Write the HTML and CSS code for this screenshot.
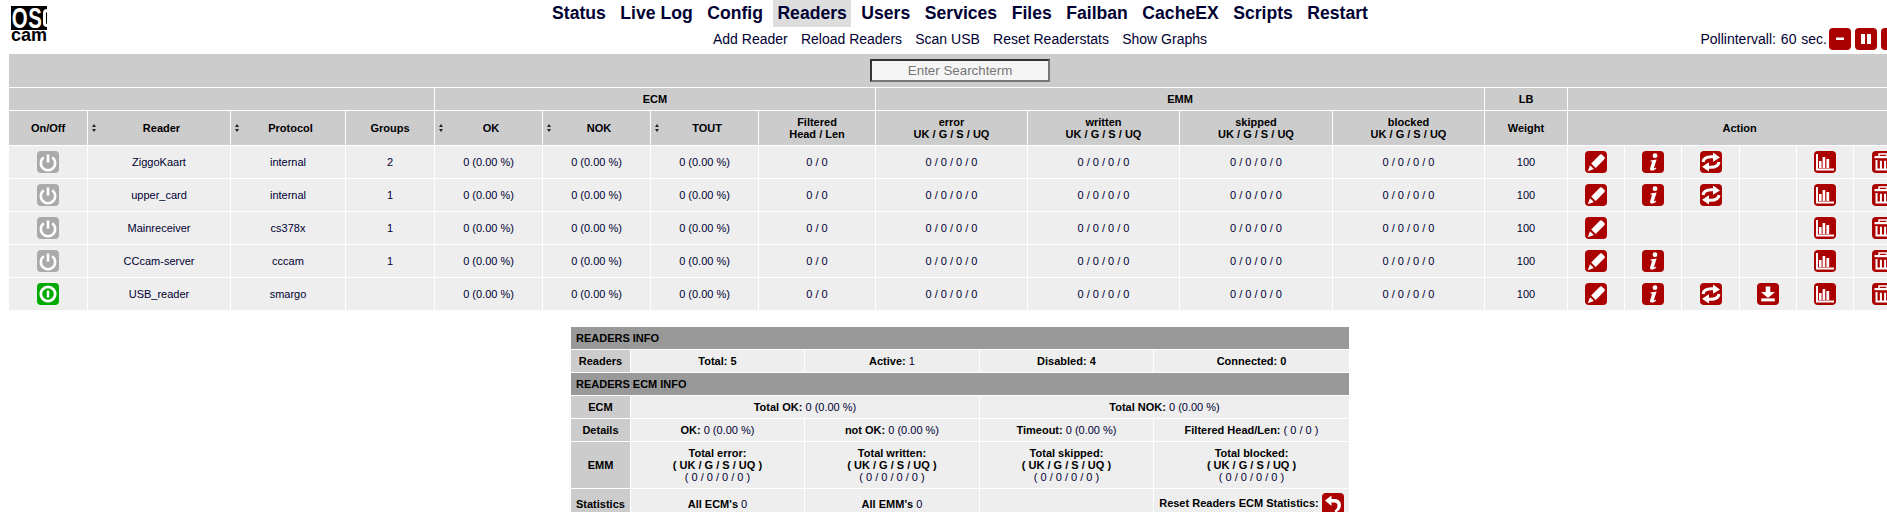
FILE: index.html
```html
<!DOCTYPE html>
<html lang="en">
<head>
<meta charset="utf-8">
<title>OSCam Readers</title>
<link rel="stylesheet" href="styles.css">
</head>
<body>
<svg class="defs" aria-hidden="true">
  <symbol id="i-edit" viewBox="0 0 22 22">
    <path fill="#fff" d="M6.2 12.400 14.600 4c.9-.9 1.700-.9 2.400-.3l2.400 2.400c.6.700.6 1.500-.3 2.400l-8.400 8.400z"/>
    <path fill="#fff" d="M5 14.200 8.900 18 2.800 20.200z"/>
  </symbol>
  <symbol id="i-info" viewBox="0 0 22 22">
    <circle cx="13" cy="4.700" r="2.400" fill="#fff"/>
    <path fill="#fff" d="M8.600 9.400 14.600 8.600 12 16.800c-.2.700.3.800 1.900-.3l.4.700C12.700 19 11.400 19.600 9.900 19.600c-1.500 0-2.200-.9-1.700-2.600l1.700-5.800c.2-.7-.2-.9-1.400-.8z"/>
  </symbol>
  <symbol id="i-refresh" viewBox="0 0 22 22">
    <path fill="none" stroke="#fff" stroke-width="3" d="M3 11C3.500 7 7.500 5.200 14 5.800"/>
    <path fill="#fff" d="M13 1.500 20 6.400 13 10.800z"/>
    <path fill="none" stroke="#fff" stroke-width="3" d="M19 11C18.500 15 14.500 16.800 8 16.200"/>
    <path fill="#fff" d="M9 11.200 2 15.800 9 20.500z"/>
  </symbol>
  <symbol id="i-down" viewBox="0 0 22 22">
    <path fill="#fff" d="M8.700 3.500h4.600v5.600H18l-7 5.800-7-5.800h4.700z"/>
    <rect x="4.200" y="15.400" width="13.600" height="3" fill="#fff"/>
  </symbol>
  <symbol id="i-stats" viewBox="0 0 22 22">
    <path fill="#fff" d="M2 3h2v14.400h16v2H2z"/>
    <rect x="5" y="10" width="2.600" height="7" fill="#fff"/>
    <rect x="8.600" y="6" width="2.600" height="11" fill="#fff"/>
    <rect x="12.400" y="8" width="2.800" height="9" fill="#fff"/>
  </symbol>
  <symbol id="i-trash" viewBox="0 0 22 22">
    <path fill="none" stroke="#fff" stroke-width="1.500" d="M7 5V3h8v2"/>
    <rect x="2.500" y="5" width="17" height="2.200" fill="#fff"/>
    <path fill="#fff" d="M3.500 9h2v8.500h2.400V9.800h2v7.700h2.200V9.800h2v7.700h2.400V9h2v10.500h-15z"/>
  </symbol>
  <symbol id="i-off" viewBox="0 0 22 22">
    <path fill="none" stroke="#fff" stroke-width="2.600" d="M6.800 6.200a7.200 7.200 0 1 0 8.400 0"/>
    <path stroke="#fff" stroke-width="2.600" d="M11 3.500v8"/>
  </symbol>
  <symbol id="i-on" viewBox="0 0 22 22">
    <circle cx="11" cy="11" r="7.200" fill="none" stroke="#fff" stroke-width="2.800"/>
    <path stroke="#fff" stroke-width="2.400" d="M11 7.600v6.800"/>
  </symbol>
  <symbol id="i-minus" viewBox="0 0 22 22"><rect x="7" y="9.500" width="8" height="2.600" rx=".6" fill="#fff"/></symbol>
  <symbol id="i-pause" viewBox="0 0 22 22"><rect x="6" y="6" width="4" height="10" fill="#fff"/><rect x="12" y="6" width="4" height="10" fill="#fff"/></symbol>
  <symbol id="i-plus" viewBox="0 0 22 22"><path fill="#fff" d="M9.700 6h2.600v3.700H16v2.600h-3.700V16H9.700v-3.700H6V9.700h3.700z"/></symbol>
  <symbol id="i-back" viewBox="0 0 22 22">
    <path fill="#fff" d="M9.500 2.500v3.400h3c4 0 6.500 2.600 6.500 6.200 0 3.200-2 6-5.500 7.400l-1-2c1.900-1.100 3-3 3-5 0-2-1.300-3.100-3.500-3.100h-2.500v3.600L3 7.500z"/>
  </symbol>
</svg>

<header class="topbar">
  <a class="logo" href="#"><span class="logo-os"><span class="logo-os-text">OS</span><span class="logo-c"></span></span><span class="logo-cam">cam</span></a>
  <nav class="menu">
    <a href="#">Status</a><a href="#">Live Log</a><a href="#">Config</a><a href="#" class="current">Readers</a><a href="#">Users</a><a href="#">Services</a><a href="#">Files</a><a href="#">Failban</a><a href="#">CacheEX</a><a href="#">Scripts</a><a href="#">Restart</a>
  </nav>
  <div class="subrow">
    <nav class="submenu">
      <a href="#">Add Reader</a><a href="#">Reload Readers</a><a href="#">Scan USB</a><a href="#">Reset Readerstats</a><a href="#">Show Graphs</a>
    </nav>
    <div class="poll">
      <span class="poll-text">Pollintervall: 60 sec.</span>
      <svg class="ico red"><use href="#i-minus"/></svg>
      <svg class="ico red"><use href="#i-pause"/></svg>
      <svg class="ico red"><use href="#i-plus"/></svg>
    </div>
  </div>
</header>

<table class="readers">
  <colgroup>
    <col class="c78"><col class="c142"><col class="c114"><col class="c88">
    <col class="c107"><col class="c107"><col class="c107"><col class="c116">
    <col class="c151"><col class="c151"><col class="c152"><col class="c151">
    <col class="c82">
    <col class="c56"><col class="c56"><col class="c57"><col class="c56"><col class="c56"><col class="c57">
  </colgroup>
  <thead>
    <tr class="r-search"><th colspan="19"><input class="search" type="text" placeholder="Enter Searchterm"></th></tr>
    <tr class="r-group">
      <th colspan="4"></th><th colspan="4">ECM</th><th colspan="4">EMM</th><th>LB</th><th colspan="6"></th>
    </tr>
    <tr class="r-head">
      <th>On/Off</th><th class="sort">Reader</th><th class="sort">Protocol</th><th>Groups</th>
      <th class="sort">OK</th><th class="sort">NOK</th><th class="sort">TOUT</th><th>Filtered<br>Head / Len</th>
      <th>error<br>UK / G / S / UQ</th><th>written<br>UK / G / S / UQ</th><th>skipped<br>UK / G / S / UQ</th><th>blocked<br>UK / G / S / UQ</th>
      <th>Weight</th><th colspan="6">Action</th>
    </tr>
  </thead>
  <tbody>
    <tr>
      <td><svg class="ico grey"><use href="#i-off"/></svg></td><td>ZiggoKaart</td><td>internal</td><td>2</td>
      <td>0 (0.00 %)</td><td>0 (0.00 %)</td><td>0 (0.00 %)</td><td>0 / 0</td>
      <td>0 / 0 / 0 / 0</td><td>0 / 0 / 0 / 0</td><td>0 / 0 / 0 / 0</td><td>0 / 0 / 0 / 0</td><td>100</td>
      <td><svg class="ico red"><use href="#i-edit"/></svg></td><td><svg class="ico red"><use href="#i-info"/></svg></td><td><svg class="ico red"><use href="#i-refresh"/></svg></td><td></td><td><svg class="ico red"><use href="#i-stats"/></svg></td><td><svg class="ico red"><use href="#i-trash"/></svg></td>
    </tr>
    <tr>
      <td><svg class="ico grey"><use href="#i-off"/></svg></td><td>upper_card</td><td>internal</td><td>1</td>
      <td>0 (0.00 %)</td><td>0 (0.00 %)</td><td>0 (0.00 %)</td><td>0 / 0</td>
      <td>0 / 0 / 0 / 0</td><td>0 / 0 / 0 / 0</td><td>0 / 0 / 0 / 0</td><td>0 / 0 / 0 / 0</td><td>100</td>
      <td><svg class="ico red"><use href="#i-edit"/></svg></td><td><svg class="ico red"><use href="#i-info"/></svg></td><td><svg class="ico red"><use href="#i-refresh"/></svg></td><td></td><td><svg class="ico red"><use href="#i-stats"/></svg></td><td><svg class="ico red"><use href="#i-trash"/></svg></td>
    </tr>
    <tr>
      <td><svg class="ico grey"><use href="#i-off"/></svg></td><td>Mainreceiver</td><td>cs378x</td><td>1</td>
      <td>0 (0.00 %)</td><td>0 (0.00 %)</td><td>0 (0.00 %)</td><td>0 / 0</td>
      <td>0 / 0 / 0 / 0</td><td>0 / 0 / 0 / 0</td><td>0 / 0 / 0 / 0</td><td>0 / 0 / 0 / 0</td><td>100</td>
      <td><svg class="ico red"><use href="#i-edit"/></svg></td><td></td><td></td><td></td><td><svg class="ico red"><use href="#i-stats"/></svg></td><td><svg class="ico red"><use href="#i-trash"/></svg></td>
    </tr>
    <tr>
      <td><svg class="ico grey"><use href="#i-off"/></svg></td><td>CCcam-server</td><td>cccam</td><td>1</td>
      <td>0 (0.00 %)</td><td>0 (0.00 %)</td><td>0 (0.00 %)</td><td>0 / 0</td>
      <td>0 / 0 / 0 / 0</td><td>0 / 0 / 0 / 0</td><td>0 / 0 / 0 / 0</td><td>0 / 0 / 0 / 0</td><td>100</td>
      <td><svg class="ico red"><use href="#i-edit"/></svg></td><td><svg class="ico red"><use href="#i-info"/></svg></td><td></td><td></td><td><svg class="ico red"><use href="#i-stats"/></svg></td><td><svg class="ico red"><use href="#i-trash"/></svg></td>
    </tr>
    <tr>
      <td><svg class="ico green"><use href="#i-on"/></svg></td><td>USB_reader</td><td>smargo</td><td></td>
      <td>0 (0.00 %)</td><td>0 (0.00 %)</td><td>0 (0.00 %)</td><td>0 / 0</td>
      <td>0 / 0 / 0 / 0</td><td>0 / 0 / 0 / 0</td><td>0 / 0 / 0 / 0</td><td>0 / 0 / 0 / 0</td><td>100</td>
      <td><svg class="ico red"><use href="#i-edit"/></svg></td><td><svg class="ico red"><use href="#i-info"/></svg></td><td><svg class="ico red"><use href="#i-refresh"/></svg></td><td><svg class="ico red"><use href="#i-down"/></svg></td><td><svg class="ico red"><use href="#i-stats"/></svg></td><td><svg class="ico red"><use href="#i-trash"/></svg></td>
    </tr>
  </tbody>
</table>

<table class="info">
  <colgroup><col class="c59"><col class="c173"><col class="c174"><col class="c173"><col class="c195"></colgroup>
  <tr class="r-title"><th colspan="5">READERS INFO</th></tr>
  <tr class="r-line">
    <th class="label">Readers</th><td><b>Total:</b> <b>5</b></td><td><b>Active:</b> 1</td><td><b>Disabled:</b> <b>4</b></td><td><b>Connected:</b> <b>0</b></td>
  </tr>
  <tr class="r-title"><th colspan="5">READERS ECM INFO</th></tr>
  <tr class="r-line">
    <th class="label">ECM</th><td colspan="2"><b>Total OK:</b> 0 (0.00 %)</td><td colspan="2"><b>Total NOK:</b> 0 (0.00 %)</td>
  </tr>
  <tr class="r-line">
    <th class="label">Details</th><td><b>OK:</b> 0 (0.00 %)</td><td><b>not OK:</b> 0 (0.00 %)</td><td><b>Timeout:</b> 0 (0.00 %)</td><td><b>Filtered Head/Len:</b> ( 0 / 0 )</td>
  </tr>
  <tr class="r-emm">
    <th class="label">EMM</th>
    <td><b>Total error:<br>( UK / G / S / UQ )</b><br>( 0 / 0 / 0 / 0 )</td>
    <td><b>Total written:<br>( UK / G / S / UQ )</b><br>( 0 / 0 / 0 / 0 )</td>
    <td><b>Total skipped:<br>( UK / G / S / UQ )</b><br>( 0 / 0 / 0 / 0 )</td>
    <td><b>Total blocked:<br>( UK / G / S / UQ )</b><br>( 0 / 0 / 0 / 0 )</td>
  </tr>
  <tr class="r-stats">
    <th class="label">Statistics</th><td><b>All ECM's</b> 0</td><td><b>All EMM's</b> 0</td><td></td><td><b>Reset Readers ECM Statistics:</b> <svg class="ico red"><use href="#i-back"/></svg></td>
  </tr>
</table>
</body>
</html>
```

FILE: styles.css
```css
html {
  overflow: hidden;
}

body {
  width: 1904px;
  margin: 0 8px;
  font-family: "Liberation Sans", Arial, sans-serif;
  font-size: 11px;
  color: #000033;
  background: #fff;
}

a {
  color: inherit;
  text-decoration: none;
}

.defs {
  display: none;
}

/* top bar */
.topbar {
  display: grid;
  grid-template-rows: 28px 25px;
}

.logo {
  grid-area: 1 / 1 / 3 / 2;
  justify-self: start;
  align-self: start;
  display: flex;
  flex-direction: column;
  width: 36px;
  margin: 6px 0 0 3px;
  color: #000;
}

.logo-os {
  display: flex;
  align-items: center;
  height: 24px;
  background: #000;
  color: #fff;
  font-weight: bold;
  font-size: 30px;
  line-height: 26px;
}

.logo-os-text {
  flex: none;
  width: 31px;
  padding-left: 1px;
  box-sizing: border-box;
  white-space: nowrap;
  letter-spacing: 1px;
  transform: scaleX(0.68);
  transform-origin: 0 0;
}

.logo-c {
  flex: none;
  box-sizing: border-box;
  width: 4px;
  height: 18px;
  margin-left: 1px;
  border: 3px solid #fff;
  border-right: 0;
  border-radius: 4px 0 0 4px;
}

.logo-cam {
  display: block;
  font-weight: bold;
  font-size: 18px;
  line-height: 10px;
  height: 12px;
}

.menu {
  grid-area: 1 / 1 / 2 / 2;
  justify-self: center;
  display: flex;
  gap: 6.5px;
  height: 27px;
  font-size: 17.6px;
  font-weight: bold;
  line-height: 27px;
}

.menu a {
  padding: 0 4px;
}

.menu .current {
  background: #ddd;
}

.subrow {
  grid-area: 2 / 1 / 3 / 2;
  display: grid;
  align-items: start;
}

.submenu {
  grid-area: 1 / 1;
  justify-self: center;
  display: flex;
  gap: 13.2px;
  font-size: 14px;
  line-height: 22px;
}

.poll {
  grid-area: 1 / 1;
  justify-self: end;
  display: flex;
  align-items: center;
  gap: 4px;
  margin-right: 9px;
  font-size: 14px;
  line-height: 22px;
}

.poll-text {
  margin-right: -2px;
  word-spacing: 1px;
}

/* icons */
.ico {
  display: inline-block;
  width: 22px;
  height: 22px;
  border-radius: 4px;
  vertical-align: middle;
}

.red {
  background: #aa0000;
}

.grey {
  background: #aaaaaa;
}

.green {
  background: #00aa00;
}

/* tables */
table {
  border-collapse: separate;
  border-spacing: 1px;
  table-layout: fixed;
  font-size: 11px;
}

th,
td {
  padding: 0;
  text-align: center;
  vertical-align: middle;
  line-height: 12px;
}

th {
  background: #cccccc;
  font-weight: bold;
  color: #000;
}

td {
  background: #eeeeee;
}

td b {
  color: #000;
}

.readers {
  width: 1904px;
}

.r-search th {
  height: 33px;
}

.r-group th {
  height: 22px;
}

.r-head th {
  height: 34px;
}

.readers tbody td {
  height: 32px;
}

.search {
  display: block;
  box-sizing: border-box;
  width: 180px;
  height: 23px;
  margin: 0 auto;
  padding: 0;
  border: 2px solid;
  border-color: #333 #777 #777 #333;
  background: #f5f5f5;
  font-family: "Liberation Sans", Arial, sans-serif;
  font-size: 13.33px;
  text-align: center;
}

.search::placeholder {
  color: #757575;
  opacity: 1;
}

.sort {
  position: relative;
  padding-left: 5px;
}

.sort::before,
.sort::after {
  content: "";
  position: absolute;
  left: 4px;
  top: 50%;
  border-left: 2.5px solid transparent;
  border-right: 2.5px solid transparent;
}

.sort::before {
  margin-top: -4px;
  border-bottom: 3px solid #222;
}

.sort::after {
  margin-top: 1px;
  border-top: 3px solid #222;
}

.c56 { width: 56px; }
.c57 { width: 57px; }
.c59 { width: 59px; }
.c78 { width: 78px; }
.c82 { width: 82px; }
.c88 { width: 88px; }
.c107 { width: 107px; }
.c114 { width: 114px; }
.c116 { width: 116px; }
.c142 { width: 142px; }
.c151 { width: 151px; }
.c152 { width: 152px; }
.c173 { width: 173px; }
.c174 { width: 174px; }
.c195 { width: 195px; }

/* info table */
.info {
  width: 780px;
  margin: 15px auto 0;
}

.r-title th {
  height: 22px;
  padding-left: 5px;
  background: #999999;
  text-align: left;
}

.r-line th,
.r-line td {
  height: 22px;
}

.r-emm th,
.r-emm td {
  height: 46px;
}

.r-stats th,
.r-stats td {
  height: 29px;
}
```
